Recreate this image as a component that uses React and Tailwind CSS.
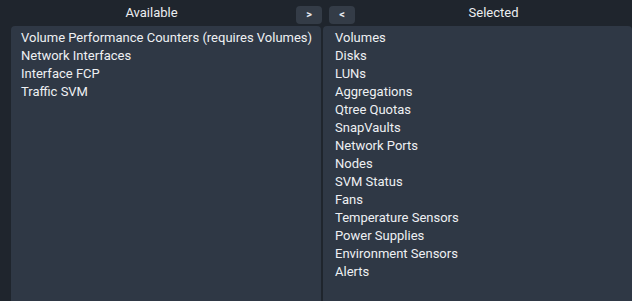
import React from 'react';

const available = [
  'Volume Performance Counters (requires Volumes)',
  'Network Interfaces',
  'Interface FCP',
  'Traffic SVM',
];

const selected = [
  'Volumes',
  'Disks',
  'LUNs',
  'Aggregations',
  'Qtree Quotas',
  'SnapVaults',
  'Network Ports',
  'Nodes',
  'SVM Status',
  'Fans',
  'Temperature Sensors',
  'Power Supplies',
  'Environment Sensors',
  'Alerts',
];

const MoveButton = ({ label }) => (
  <button className="mt-[6px] w-[26px] h-[18px] rounded-[4px] bg-[#343c47] text-[#e8ebef] text-[11px] font-bold leading-[18px] flex items-center justify-center">
    {label}
  </button>
);

const List = ({ items, padLeft }) => (
  <div className={`flex-1 bg-[#2f3845] rounded-t-[4px] pt-[3px] ${padLeft}`}>
    {items.map((item) => (
      <div key={item} className="text-[13px] leading-[18px] text-[#eef0f3] whitespace-nowrap">
        {item}
      </div>
    ))}
  </div>
);

const App = () => {
  return (
    <div
      className="w-[632px] h-[301px] bg-[#1f252d] flex pl-[11px] overflow-hidden"
      style={{ fontFamily: 'Roboto, "Noto Sans", sans-serif' }}
    >
      {/* Available */}
      <div className="w-[311px] flex flex-col">
        <div className="h-[26px] flex items-start">
          <div className="flex-1 text-center pt-[4px] pr-[4px] text-[13px] leading-[18px] text-[#eceef1]">Available</div>
          <MoveButton label=">" />
        </div>
        <div className="flex-1 flex pr-[1px]">
          <List items={available} padLeft="pl-[10px]" />
        </div>
      </div>

      <div className="w-[1px]" />

      {/* Selected */}
      <div className="flex-1 flex flex-col">
        <div className="h-[26px] flex items-start">
          <div className="ml-[6px]">
            <MoveButton label="<" />
          </div>
          <div className="flex-1 text-center pt-[4px] text-[13px] leading-[18px] text-[#eceef1]">Selected</div>
        </div>
        <div className="flex-1 flex">
          <List items={selected} padLeft="pl-[12px]" />
        </div>
      </div>
    </div>
  );
};

export default App;
